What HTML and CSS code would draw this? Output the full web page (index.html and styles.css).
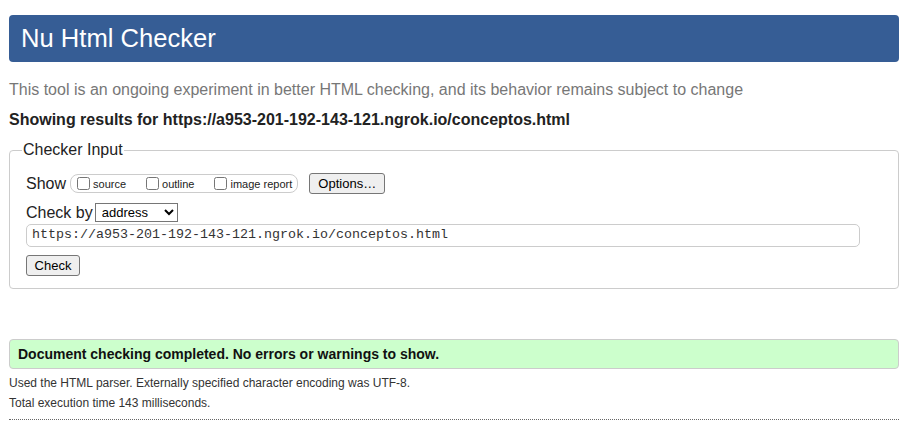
FILE: index.html
```html
<!DOCTYPE html>
<html lang="en">
<head>
<meta charset="utf-8">
<title>Nu Html Checker</title>
<link rel="stylesheet" href="styles.css">
</head>
<body>
<div class="page">
  <h1 class="title">Nu Html Checker</h1>
  <p class="intro">This tool is an ongoing experiment in better HTML checking, and its behavior remains subject to change</p>
  <p class="showing">Showing results for https://a953-201-192-143-121.ngrok.io/conceptos.html</p>
  <fieldset class="input-box">
    <legend class="legend">Checker Input</legend>
    <div class="row">
      <span class="label">Show</span>
      <span class="opts">
        <label class="opt"><input type="checkbox" class="cb">source</label>
        <label class="opt"><input type="checkbox" class="cb">outline</label>
        <label class="opt"><input type="checkbox" class="cb">image report</label>
      </span>
      <button class="btn options">Options…</button>
    </div>
    <div class="row row-check">
      <span class="label">Check by</span>
      <select class="sel"><option>address</option></select>
    </div>
    <input class="url" type="text" value="https://a953-201-192-143-121.ngrok.io/conceptos.html">
    <div class="row row-btn">
      <button class="btn check">Check</button>
    </div>
  </fieldset>
  <p class="success">Document checking completed. No errors or warnings to show.</p>
  <p class="details">Used the HTML parser. Externally specified character encoding was UTF-8.</p>
  <p class="details">Total execution time 143 milliseconds.</p>
  <hr class="rule">
</div>
</body>
</html>
```

FILE: styles.css
```css
html, body {
  margin: 0;
  padding: 0;
  background: #fff;
}
body {
  font-family: "Liberation Sans", Arial, sans-serif;
  color: #222;
}
.page {
  width: 890px;
  margin: 0 0 0 9px;
  padding-top: 15px;
}
.title {
  margin: 0;
  background: #365d95;
  color: #fff;
  font-weight: normal;
  font-size: 25.6px;
  line-height: 29px;
  padding: 9px 12px;
  border-radius: 4px;
}
.intro {
  margin: 19px 0 0;
  font-size: 16px;
  line-height: 18px;
  color: #777;
}
.showing {
  margin: 12px 0 0;
  font-size: 16px;
  line-height: 18px;
  font-weight: bold;
  color: #222;
}
.input-box {
  margin: 12px 0 0;
  border: 1px solid #ccc;
  border-radius: 4px;
  padding: 14px 15px 12px 16px;
  min-width: 0;
}
.legend {
  font-size: 16px;
  padding: 0 1px;
  margin-left: -4px;
  color: #222;
}
.row {
  display: flex;
  align-items: center;
}
.label {
  font-size: 16px;
}
.opts {
  display: inline-flex;
  align-items: center;
  margin-left: 4px;
  border: 1px solid #ccc;
  border-radius: 8px;
  height: 17px;
  padding: 0 5px 0 6px;
  font-size: 11px;
}
.opt {
  display: inline-flex;
  align-items: center;
  margin-right: 20px;
}
.opt:last-child {
  margin-right: 0;
}
.cb {
  margin: 0 3px 0 0;
  width: 13px;
  height: 13px;
}
.btn {
  font-family: "Liberation Sans", Arial, sans-serif;
  font-size: 13px;
  padding: 1px 6px;
  height: 21px;
  border: 1px solid #767676;
  border-radius: 3px;
  background: #efefef;
  color: #000;
}
.options {
  margin-left: 11px;
  width: 76px;
}
.row-check {
  margin-top: 9px;
}
.sel {
  margin-left: 2px;
  font-family: "Liberation Sans", Arial, sans-serif;
  font-size: 13px;
  height: 19px;
  width: 83px;
  padding: 0 0 0 2px;
  border: 1px solid #767676;
  border-radius: 0;
  background: #fff;
  color: #000;
}
.url {
  display: block;
  box-sizing: border-box;
  width: 834px;
  height: 23px;
  margin-top: 2px;
  padding: 0 5px 3px;
  font-family: "Liberation Mono", "Courier New", monospace;
  font-size: 13.33px;
  color: #333;
  border: 1px solid #ccc;
  border-radius: 5px;
}
.row-btn {
  margin-top: 8px;
}
.check {
  width: 54px;
}
.success {
  margin: 50px 0 0;
  background: #ccffcc;
  border: 1px solid #ccc;
  border-radius: 4px;
  padding: 6px 8px;
  font-size: 14px;
  line-height: 16px;
  font-weight: bold;
  color: #111;
}
.details {
  margin: 6px 0 0;
  font-size: 12px;
  line-height: 16px;
  color: #333;
}
.details + .details {
  margin-top: 4px;
}
.rule {
  margin: 8px 0 0;
  border: 0;
  border-top: 1px dotted #666;
  height: 0;
}
```
